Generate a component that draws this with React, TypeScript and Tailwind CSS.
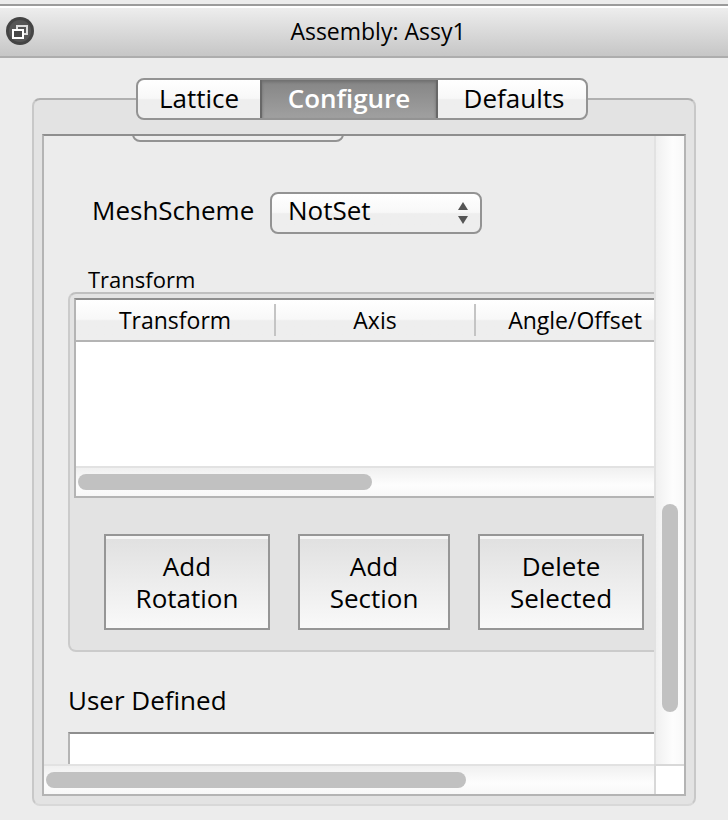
import type { ReactNode } from "react";

const tabs = ["Lattice", "Configure", "Defaults"];
const columns = ["Transform", "Axis", "Angle/Offset"];

const raised = "bg-linear-to-b from-white from-0% via-[#f8f8f8] via-48% to-[#eeeeee] to-52%";

function TitleBar() {
  return (
    <header className="mt-1 flex h-[54px] shrink-0 items-center border-y-2 border-t-[#9b9b9b] border-b-[#adadad] bg-linear-to-b from-[#efefef] to-[#c6c6c6] px-1.5 shadow-[inset_0_2px_0_#ffffff]">
      <button type="button" aria-label="Float panel" className="size-7 shrink-0">
        <svg viewBox="0 0 28 28" className="size-7" fill="none">
          <circle cx="14" cy="14" r="14" fill="#444444" />
          <circle cx="14" cy="14" r="11" fill="#565656" />
          <path d="M11 12V9H21V17H18" stroke="#dddddd" strokeWidth="2" />
          <rect x="7" y="13" width="10" height="8" fill="#484848" stroke="#ffffff" strokeWidth="2" />
        </svg>
      </button>
      <h1 className="flex-1 text-center text-[23px] leading-7 font-medium">Assembly: Assy1</h1>
    </header>
  );
}

function TabBar() {
  return (
    <div
      role="tablist"
      className={`relative z-10 flex h-[42px] shrink-0 overflow-hidden rounded-lg border-2 border-[#939393] ${raised}`}
    >
      {tabs.map((tab) =>
        tab === "Configure" ? (
          <button
            key={tab}
            type="button"
            role="tab"
            aria-selected="true"
            className="-my-0.5 w-[178px] border-2 border-[#686868] border-b-[#939393] bg-linear-to-b from-[#858585] to-[#a0a0a0] pb-0.5 font-semibold text-white shadow-[inset_0_2px_3px_#707070]"
          >
            {tab}
          </button>
        ) : (
          <button
            key={tab}
            type="button"
            role="tab"
            aria-selected="false"
            className={tab === "Lattice" ? "w-[122px] pb-0.5" : "w-[148px] pb-0.5 pl-1"}
          >
            {tab}
          </button>
        ),
      )}
    </div>
  );
}

function PopUp({ id, label, children }: { id: string; label?: string; children?: ReactNode }) {
  return (
    <div className="relative w-[212px]">
      <select
        id={id}
        aria-label={label}
        className={`block h-[42px] w-full appearance-none rounded-lg border-2 border-[#939393] pr-10 pb-1.5 pl-4 ${raised}`}
      >
        {children}
      </select>
      <svg viewBox="0 0 10 22" className="pointer-events-none absolute top-2.5 right-3.5 h-[22px] w-2.5" fill="#555555">
        <path d="M5 0L10 8H0Z" />
        <path d="M0 14H10L5 22Z" />
      </svg>
    </div>
  );
}

function HorizontalScrollbar({ thumb }: { thumb: string }) {
  return (
    <div className="h-[30px] border-t-2 border-[#e2e2e2] bg-linear-to-b from-[#f0f0f0] via-[#fdfdfd] via-60% to-[#f8f8f8] px-0.5 pt-1.5">
      <div className={`h-4 rounded-full bg-[#c1c1c1] ${thumb}`} />
    </div>
  );
}

function TransformTable() {
  return (
    <div className="mt-1 ml-1 border-2 border-[#b4b4b4] border-t-[#8e8e8e] bg-white">
      <div className="h-[166px]">
        <table className="w-[600px] table-fixed border-collapse">
          <thead>
            <tr className={`h-10 ${raised} shadow-[0_2px_0_#b4b4b4]`}>
              {columns.map((column) => (
                <th key={column} scope="col" className="p-0 text-[23px] leading-8 font-medium">
                  <div className="border-r-2 border-[#c4c4c4]">{column}</div>
                </th>
              ))}
            </tr>
          </thead>
          <tbody />
        </table>
      </div>
      <HorizontalScrollbar thumb="w-[294px]" />
    </div>
  );
}

function ActionButton({ width, children }: { width: string; children: ReactNode }) {
  return (
    <button
      type="button"
      className={`h-24 border-2 border-[#969696] bg-linear-to-b from-[#e0e0e0] to-[#f9f9f9] px-4 leading-8 shadow-[inset_0_3px_0_#f5f5f5] ${width}`}
    >
      {children}
    </button>
  );
}

function ConfigureForm() {
  return (
    <div className="-mt-9 w-[700px] pl-6">
      <div className="pl-16">
        <PopUp id="previous" label="Previous setting" />
      </div>
      <div className="mt-[50px] flex items-center pl-6">
        <label htmlFor="mesh-scheme" className="w-[178px] pb-1.5">
          MeshScheme
        </label>
        <PopUp id="mesh-scheme">
          <option>NotSet</option>
        </PopUp>
      </div>
      <h2 className="mt-8 pl-5 text-[22px] leading-[26px]">Transform</h2>
      <section className="h-[360px] rounded-lg border-2 border-[#cbcbcb] border-t-[#bfbfbf] bg-[#e3e3e3]">
        <TransformTable />
        <div className="mt-9 flex gap-7 pl-[34px]">
          <ActionButton width="w-[166px]">Add Rotation</ActionButton>
          <ActionButton width="w-[152px]">Add Section</ActionButton>
          <ActionButton width="w-[166px]">Delete Selected</ActionButton>
        </div>
      </section>
      <label htmlFor="user-defined" className="mt-8 block pb-4 leading-8">
        User Defined
      </label>
      <textarea
        id="user-defined"
        className="block h-40 w-full resize-none border-2 border-[#b4b4b4] border-t-[#8e8e8e] bg-white"
      />
    </div>
  );
}

export default function App() {
  return (
    <div className="flex h-screen flex-col overflow-hidden bg-[#ececec] font-['Lucida_Grande','Open_Sans',sans-serif] text-[26px] leading-8 font-medium text-black">
      <TitleBar />
      <main className="flex min-h-0 flex-1 flex-col px-8 pt-5 pb-3.5">
        <div className="flex justify-center pr-1">
          <TabBar />
        </div>
        <div className="-mt-[22px] flex min-h-0 flex-1 flex-col rounded-lg border-2 border-[#c8c8c8] border-t-[#b0b0b0] border-b-[#d8d8d8] bg-[#e3e3e3] px-2 pt-[34px] pb-2">
          <div className="flex min-h-0 flex-1 flex-col border-2 border-[#b4b4b4] border-t-[#8e8e8e] bg-[#ececec]">
            <div className="flex min-h-0 flex-1">
              <div className="min-w-0 flex-1 overflow-hidden">
                <ConfigureForm />
              </div>
              <div className="flex w-[30px] shrink-0 flex-col border-l-2 border-[#e2e2e2] bg-linear-to-r from-[#f0f0f0] via-[#fdfdfd] via-60% to-[#f8f8f8] pb-[52px] pl-1.5">
                <div className="mt-auto h-[208px] w-4 rounded-full bg-[#c1c1c1]" />
              </div>
            </div>
            <div className="flex">
              <div className="min-w-0 flex-1">
                <HorizontalScrollbar thumb="w-[420px]" />
              </div>
              <div className="w-[30px] border-t-2 border-l-2 border-[#d8d8d8] bg-white" />
            </div>
          </div>
        </div>
      </main>
    </div>
  );
}
